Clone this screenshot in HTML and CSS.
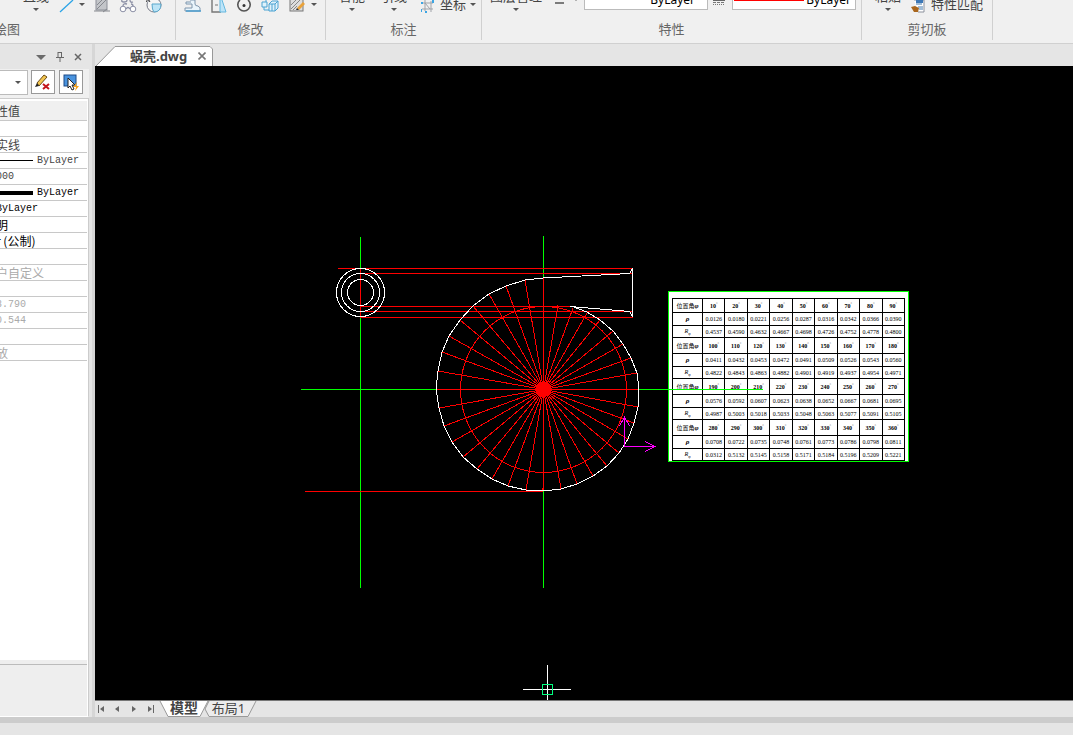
FILE: index.html
```html
<!DOCTYPE html>
<html lang="zh-CN">
<head>
<meta charset="utf-8">
<title>蜗壳.dwg</title>
<link rel="stylesheet" href="styles.css">
</head>
<body>
<div class="app">
  <header class="ribbon">
    <section class="group group-draw">
      <div class="tools">
        <button class="tool big clipped"><span class="big-label">圆弧</span></button>
        <button class="tool big"><span class="big-label">直线</span><i class="caret"></i></button>
        <button class="tool" aria-label="构造线"><svg width="16" height="14"><path d="M2 12L15 0" stroke="#2aa3e6" stroke-width="1.3" fill="none"/></svg></button>
        <i class="caret mid"></i>
        <button class="tool" aria-label="填充"><svg width="16" height="14"><rect x="2" y="-4" width="11" height="14" fill="#c3c5c9" stroke="#8b8e97"/><path d="M3 9L12 0M3 5L8 0M13 9l-4 3M0 11h16" stroke="#85888e"/></svg></button>
        <button class="tool" aria-label="修订云线"><svg width="18" height="14"><path d="M3 0q-1 2 2 2q3 0 3-2M11 0q0 3 3 2M8 4q-4-1-4 2M12 4q2 0 2 2" fill="none" stroke="#8b8fa5" stroke-width="1.3"/><circle cx="4" cy="9" r="2.8" fill="#fff" stroke="#8b8fa5"/><circle cx="14" cy="9" r="2.8" fill="#fff" stroke="#8b8fa5"/><path d="M7 9q2-3 4 0" fill="none" stroke="#8b8fa5" stroke-width="1.3"/></svg></button>
        <button class="tool" aria-label="面域"><svg width="16" height="14"><circle cx="8" cy="5" r="7" fill="#f5f5f5" stroke="#777b88"/><path d="M6 4h9q0 8-7 8q-2-2-2-8" fill="#bce4f6" stroke="#5aa7cb"/><path d="M0 2l2-3 2 3" stroke="#333" fill="none"/></svg></button>
      </div>
      <h2 class="group-name">绘图</h2>
    </section>
    <section class="group group-modify">
      <div class="tools">
        <button class="tool" aria-label="偏移"><svg width="18" height="14"><path d="M6 0h5v4q0 2 3 2q3 1 2 5H1V8h7V4H2V2h5" fill="#e9f5fc" stroke="#7e96ad"/><path d="M2 11h15" stroke="#4b9cce" stroke-width="1.5"/></svg></button>
        <button class="tool" aria-label="镜像"><svg width="16" height="14"><path d="M1 0v12h9" fill="none" stroke="#777" stroke-width="1.4"/><path d="M9 0v12h6L11 0" fill="#bde4f8" stroke="#64b7df"/><path d="M4 5h3" stroke="#777"/></svg></button>
        <button class="tool" aria-label="旋转"><svg width="16" height="14"><path d="M12 0A6.200 6.200 0 1 1 4 0" fill="none" stroke="#555" stroke-width="1.6"/><circle cx="8" cy="5.500" r="1.500" fill="#333"/></svg></button>
        <button class="tool" aria-label="阵列"><svg width="18" height="14"><path d="M1 2h5v5H1zM8 4l3-3h6v7l-3 3H8zM8 4h6v7M14 4l3-3M3 7v3h5M5 0v2M11 4v7" fill="#dff2fb" stroke="#4ca3d2"/></svg></button>
        <button class="tool" aria-label="编辑填充"><svg width="18" height="14"><rect x="2" y="-4" width="13" height="15" fill="#ddd" stroke="#777"/><path d="M3 5l5-5M3 9l9-9M5 10l4-4" stroke="#888"/><path d="M9 8l6-6 2 2-6 6z" fill="#e9a23b"/><path d="M8 10l1-2 2 2z" fill="#333"/></svg></button>
        <i class="caret mid"></i>
      </div>
      <h2 class="group-name">修改</h2>
    </section>
    <section class="group group-dim">
      <div class="tools">
        <button class="tool big"><span class="big-label">智能</span><i class="caret"></i></button>
        <button class="tool big"><span class="big-label">引线</span><i class="caret"></i></button>
        <button class="tool text"><svg width="14" height="14"><path d="M2 3h10M1 9h11M4 0v11M10 1v11M4 3l5 6" fill="none" stroke="#a0a3a9"/><path d="M0 3h2M0 9v3M4 12h2M12 0v3" stroke="#3ca5e4" stroke-width="2"/></svg><span>坐标</span><i class="caret"></i></button>
      </div>
      <h2 class="group-name">标注</h2>
    </section>
    <section class="group group-props">
      <div class="tools">
        <button class="tool big"><span class="big-label">图层管理</span><i class="caret"></i></button>
        <svg class="weight" width="24" height="14"><path d="M1 3h9" stroke="#555" stroke-width="1.500"/><path d="M21 0h2" stroke="#777"/></svg>
        <label class="combo"><select class="combo-select" aria-label="线型"><option>ByLayer</option></select></label>
        <svg class="linetype" width="14" height="14"><path d="M1 .5h12" stroke="#666"/><path d="M1 2.500h12" stroke="#777" stroke-dasharray="3 1"/><path d="M1 4.500h12" stroke="#777" stroke-dasharray="1 1"/></svg>
        <label class="combo combo-color"><span class="swatch"></span><select class="combo-select" aria-label="颜色"><option>ByLayer</option></select></label>
      </div>
      <h2 class="group-name">特性</h2>
    </section>
    <section class="group group-clip">
      <div class="tools">
        <button class="tool big"><span class="big-label">粘贴</span><i class="caret"></i></button>
        <button class="tool text"><svg width="16" height="14"><path d="M4 0h10v12H8" fill="#fff" stroke="#8c919c"/><path d="M6 0h7v3H6z" fill="#3d78b7"/><path d="M6 4h6M8 7h5M9 9h4" stroke="#477daf"/><path d="M1 7l4-1 4 2-1 4H4z" fill="#a9661d"/></svg><span>特性匹配</span></button>
      </div>
      <h2 class="group-name">剪切板</h2>
    </section>
  </header>

  <div class="workspace">
    <aside class="panel">
      <div class="panel-head">
        <button class="tool" aria-label="菜单"><svg width="10" height="10"><path d="M0 3h10L5 8z" fill="#6b6b6b"/></svg></button>
        <button class="tool" aria-label="固定"><svg width="8" height="10"><path d="M2 0v5M2 .5h4M5.500 0v5M0 5.500h8M4 6v4" stroke="#666" fill="none"/></svg></button>
        <button class="tool" aria-label="关闭"><svg width="8" height="10"><path d="M1 2l6 6M7 2L1 8" stroke="#666" stroke-width="1.500"/></svg></button>
      </div>
      <div class="panel-tools">
        <button class="picker" aria-label="选择对象"><i class="caret"></i></button>
        <button class="square" aria-label="清除选择"><svg width="18" height="18"><path d="M3 10L10 2l3 2-8 9z" fill="#f3c650" stroke="#6b4b16"/><path d="M1 14l2-4 2 3z" fill="#222"/><path d="M9 11l6 5M15 11l-6 5" stroke="#c4161c" stroke-width="2"/></svg></button>
        <button class="square" aria-label="快速选择"><svg width="18" height="18"><rect x="2" y="2" width="12" height="11" fill="#4a94df" stroke="#1d4a87"/><path d="M6 5v10l2-2 2 4 2-1-2-4h3z" fill="#fff" stroke="#222"/><path d="M15 9l-4 5h3l-1 4 4-5h-3z" fill="#f6a21b"/></svg></button>
      </div>
      <div class="panel-body">
        <ul class="rows">
          <li class="row row-title"><span class="back">性值</span></li>
          <li class="row"></li>
          <li class="row grey"><span class="back">实线</span></li>
          <li class="row grey"><i class="rule"></i><span class="latin">ByLayer</span></li>
          <li class="row grey"><span class="latin back">000</span></li>
          <li class="row"><i class="rule thick"></i><span class="latin">ByLayer</span></li>
          <li class="row"><span class="latin back">ByLayer</span></li>
          <li class="row"><span class="back">明</span></li>
          <li class="row"><span class="back">r (公制)</span></li>
          <li class="row"></li>
          <li class="row off"><span class="back">户自定义</span></li>
          <li class="row"></li>
          <li class="row off"><span class="latin back">8.790</span></li>
          <li class="row off"><span class="latin back">0.544</span></li>
          <li class="row"></li>
          <li class="row off"><span class="back">放</span></li>
        </ul>
        <div class="hint"></div>
      </div>
    </aside>

    <main class="document">
      <nav class="file-tabs">
        <div class="file-tab">
          <svg class="shape" width="118" height="21"><path d="M0 21L20 .5H115L117.500 3V21" fill="#fff" stroke="#999"/></svg>
          <span class="file-name">蜗壳.dwg</span>
          <button class="tool" aria-label="关闭 蜗壳.dwg"><svg width="8" height="8"><path d="M.5 .5l7 7M7.500 .5L.5 7.500" stroke="#777" stroke-width="1.600"/></svg></button>
        </div>
      </nav>

      <div class="canvas">
        <table class="sheet"><tbody class="sheet-body" id="sheet"></tbody></table>
        <svg class="drawing" viewBox="95 66 978 634" width="978" height="634" shape-rendering="crispEdges" fill="none">
          <g stroke="#0f0"><path d="M360.500 237V588M543.500 236V588M301 389.500H763"/></g>
          <g stroke="#f00">
            <path d="M360.500 268V317M543.500 278V491M436 389.500H639M338 268.500H633M361 273.500H633M360 306.500H575M360 311.500H633M360 317.500H633M305 491.500H543"/>
            <circle cx="543.500" cy="389.500" r="83"/>
            <path id="spokes"/>
            <circle cx="543.500" cy="389.500" r="7" fill="#f00"/>
          </g>
          <g stroke="#fff">
            <circle cx="360.500" cy="292.500" r="24"/><circle cx="360.500" cy="292.500" r="19"/><circle cx="360.500" cy="292.500" r="13"/>
            <path id="casing"/>
            <path d="M630 273.500L543 278M570 306.500L630 311.500M632.500 268V317M630 273l2-4M630 312l2 4"/>
            <path d="M523 689.500H571M547.500 665V700"/>
          </g>
          <path d="M542.500 684.500h10v10h-10z" stroke="#00ff80"/>
          <path d="M624.500 417V446.500H655M619.500 426L624.500 417L629.500 426M645 441.500L655 446.500L645 451.500" stroke="#f0f"/>
        </svg>
      </div>

      <nav class="layout-tabs">
        <div class="steps">
          <button class="tool" aria-label="第一个"><svg width="8" height="8"><path d="M1.500 0v8" stroke="#666"/><path d="M7 1v6L3 4z" fill="#666"/></svg></button>
          <button class="tool" aria-label="上一个"><svg width="8" height="8"><path d="M5 1v6L1 4z" fill="#666"/></svg></button>
          <button class="tool" aria-label="下一个"><svg width="8" height="8"><path d="M1 1v6l4-3z" fill="#666"/></svg></button>
          <button class="tool" aria-label="最后一个"><svg width="8" height="8"><path d="M5.500 0v8" stroke="#666"/><path d="M0 1v6l4-3z" fill="#666"/></svg></button>
        </div>
        <button class="layout-tab active"><svg class="shape" width="49" height="17"><path d="M0 0L8 15.500H40L48 0" fill="#fff" stroke="#999"/></svg><span>模型</span></button>
        <button class="layout-tab"><svg class="shape" width="53" height="17"><path d="M4 0L0 8L4 15.500H43L51 0" fill="#ececec" stroke="#999"/></svg><span>布局1</span></button>
      </nav>
    </main>
  </div>
  <footer class="status"></footer>
</div>
<script src="app.js"></script>
</body>
</html>
```
FILE: styles.css
```css
* { box-sizing: border-box; }
body { margin: 0; font: 13px/16px "Noto Sans", "Noto Sans CJK SC", sans-serif; color: #444; background: #e5e5e5; }
button { font: inherit; color: inherit; border: 0; padding: 0; background: none; }
svg { display: block; }
.app { display: flex; flex-direction: column; height: 100vh; overflow: hidden; }

.ribbon { display: flex; flex: none; height: 44px; background: #f0f0f0; border-bottom: 1px solid #d0d0d0; overflow: hidden; }
.group { flex: none; display: flex; flex-direction: column; height: 40px; border-right: 1px solid #d0d0d0; }
.tools { display: flex; align-items: flex-start; height: 20px; }
.group-name { margin: 0; font-size: 13px; font-weight: 400; line-height: 18px; text-align: center; color: #666; white-space: nowrap; }
.group-draw { width: 176px; }
.group-draw .tools { gap: 9px; }
.group-draw .group-name { text-align: left; margin-left: -6px; }
.group-modify { width: 150px; }
.group-modify .tools { gap: 9px; padding-left: 8px; }
.group-dim { width: 156px; }
.group-dim .tools { gap: 16px; padding-left: 13px; }
.group-props { width: 380px; }
.group-props .tools { gap: 6px; padding-left: 8px; }
.group-clip { width: 131px; }
.group-clip .tools { gap: 11px; padding-left: 13px; }
.tool { display: flex; flex: none; }
.tool.big { flex-direction: column; align-items: center; }
.big .caret { margin-top: 8px; }
.big-label { margin-top: -8px; height: 8px; line-height: 8px; white-space: nowrap; }
.clipped { width: 8px; overflow: hidden; margin-right: 6px; }
.caret.mid { margin: 3px 0 0 -4px; }
.text { gap: 3px; line-height: 8px; white-space: nowrap; }
.text svg { margin-left: -2px; margin-right: 2px; }
.text .caret { margin: 3px 0 0 1px; }
.caret { flex: none; border: 3px solid transparent; border-top: 3px solid #555; border-bottom: 0; }
.weight { flex: none; margin-left: 6px; }
.combo { display: flex; flex: none; width: 124px; height: 21px; margin-top: -11px; background: #fff; border: 1px solid #bbb; }
.combo-select { flex: 1; min-width: 0; border: 0; padding: 0 12px 0 0; background: none; font: 12px/16px "Noto Sans", sans-serif; text-align: right; text-align-last: right; appearance: none; color: #000; }
.swatch { width: 70px; height: 1px; margin: 10px 0 0 1px; background: #f00; }
.combo-color .combo-select { padding: 0 4px 0 0; }
.linetype { flex: none; margin-left: -2px; }

.workspace { display: flex; flex: 1; min-height: 0; }
.panel { display: flex; flex-direction: column; flex: none; width: 95px; background: #e5e5e5; border-right: 3px solid #d6d6d6; }
.panel-head { display: flex; flex: none; align-items: center; justify-content: flex-end; gap: 10px; height: 25px; padding-right: 10px; }
.panel-tools { display: flex; flex: none; gap: 4px; height: 29px; padding-top: 1px; margin-right: 3px; background: #f0f0f0; }
.picker { display: flex; align-items: center; justify-content: flex-end; width: 28px; height: 25px; padding-right: 6px; background: #fff; border: 1px solid #bbb; border-left: 0; margin-right: -1px; }
.square { display: flex; align-items: center; justify-content: center; width: 24px; height: 24px; background: #fff; border: 1px solid #999; }
.panel-body { display: flex; flex-direction: column; flex: 1; min-height: 0; margin-right: 3px; padding: 2px 1px 0 0; background: #fff; border: 1px solid #ccc; border-left: 0; border-bottom: 1px solid #fff; }
.rows { flex: 1; margin: 0; padding: 0; list-style: none; overflow: hidden; }
.row { display: flex; align-items: center; height: 16px; border-bottom: 1px solid #c8c8c8; line-height: 14px; font-size: 12px; font-family: "Noto Sans CJK SC", sans-serif; color: #000; white-space: nowrap; }
.row-title { height: 20px; background: #f0f0f0; color: #444; }
.back { margin-left: -4px; }
.latin { font: 10px/15px "Liberation Mono", monospace; }
.grey { color: #444; }
.off { color: #aaa; }
.rule { width: 33px; height: 1px; margin-right: 4px; background: #000; }
.thick { height: 4px; }
.hint { flex: none; height: 56px; background: #eee; border-top: 4px solid #eee; box-shadow: inset 0 1px #bbb; }

.document { display: flex; flex-direction: column; flex: 1; min-width: 0; }
.file-tabs { display: flex; flex: none; align-items: flex-end; height: 22px; }
.file-tab { position: relative; display: flex; align-items: center; gap: 11px; height: 20px; padding: 0 7px 0 35px; }
.file-name { position: relative; font-weight: 700; line-height: 14px; }
.file-tab .tool { position: relative; }
.shape { position: absolute; left: 0; top: 0; overflow: visible; }
.canvas { position: relative; flex: 1; min-height: 0; overflow: hidden; background: #000; }
.drawing { position: absolute; left: 0; top: 0; }
.sheet { position: absolute; left: 573px; top: 225px; width: 241px; padding: 6px 3px 0; border: 1px solid #0f0; background: #fff; border-spacing: 0; color: #000; font: 6px/6px "Liberation Serif", "Noto Sans CJK SC", serif; table-layout: fixed; }
.cell { height: 13px; padding: 0; border: 0 solid #000; border-width: 0 1px 1px 0; text-align: center; white-space: nowrap; font-weight: 400; }
.cell:first-child { width: 31px; border-left-width: 1px; }
.radius .cell { height: 12px; }
.angle .cell { height: 16px; font-weight: 700; }
.first .cell { height: 15px; border-top-width: 1px; }
.sheet .name { font-weight: 400; }
.cell sub, .cell sup { font-size: 4px; line-height: 0; font-weight: 400; }
.greek { font-size: 7px; font-style: italic; font-weight: 700; }

.layout-tabs { display: flex; flex: none; height: 17px; border-top: 1px solid #777; padding-left: 2px; }
.steps { display: flex; align-items: center; gap: 9px; width: 63px; }
.layout-tab { position: relative; flex: none; width: 48px; line-height: 12px; padding-bottom: 3px; text-align: center; }
.layout-tab span { position: relative; }
.layout-tab.active { z-index: 1; font-weight: 700; font-size: 14px; }
.layout-tab:last-child { width: 53px; margin-left: -3px; padding-right: 6px; }
.status { flex: none; height: 18px; background: #e5e5e5; border-top: 6px solid #ccc; }
```
FILE: app.js
```javascript
const centre = [543.5, 389.5];
const rim = [
  [543, 278], [525, 280], [506, 286], [489, 294], [473, 306], [460, 320], [449, 336],
  [442, 352], [438, 371], [436, 389], [439, 408], [444, 426], [452, 442], [463, 457],
  [477, 469], [492, 479], [508, 486], [526, 490], [543, 491], [561, 489], [577, 484],
  [593, 476], [607, 466], [619, 453], [628, 439], [634, 423], [638, 407], [639, 389],
  [637, 373], [631, 358], [623, 344], [613, 331], [600, 320], [587, 312], [571, 306]
];
document.getElementById("casing").setAttribute("d", "M" + rim.map(p => p.join(" ")).join("L"));
const ends = rim.slice(0, -2).concat([[587, 313], [573, 308], [558, 305]]);
document.getElementById("spokes").setAttribute("d", ends.map(p => `M${centre.join(" ")}L${p.join(" ")}`).join(""));

const blocks = [
  { from: 10,
    rho: "0.0126 0.0180 0.0221 0.0256 0.0287 0.0316 0.0342 0.0366 0.0390",
    r: "0.4537 0.4590 0.4632 0.4667 0.4698 0.4726 0.4752 0.4778 0.4800" },
  { from: 100,
    rho: "0.0411 0.0432 0.0453 0.0472 0.0491 0.0509 0.0526 0.0543 0.0560",
    r: "0.4822 0.4843 0.4863 0.4882 0.4901 0.4919 0.4937 0.4954 0.4971" },
  { from: 190,
    rho: "0.0576 0.0592 0.0607 0.0623 0.0638 0.0652 0.0667 0.0681 0.0695",
    r: "0.4987 0.5003 0.5018 0.5033 0.5048 0.5063 0.5077 0.5091 0.5105" },
  { from: 280,
    rho: "0.0708 0.0722 0.0735 0.0748 0.0761 0.0773 0.0786 0.0798 0.0811",
    r: "0.0312 0.5132 0.5145 0.5158 0.5171 0.5184 0.5196 0.5209 0.5221" }
];
const line = (kind, name, values) =>
  `<tr class="${kind}"><th class="cell name" scope="row">${name}</th>${values.map(v => `<td class="cell">${v}</td>`).join("")}</tr>`;
document.getElementById("sheet").innerHTML = blocks.map((b, i) =>
  line(i ? "angle" : "angle first", '位置角<span class="greek">φ</span>', Array.from({ length: 9 }, (_, k) => `${b.from + 10 * k}<sup>°</sup>`)) +
  line("rho", '<span class="greek">ρ</span>', b.rho.split(" ")) +
  line("radius", "<i>R</i><sub>φ</sub>", b.r.split(" "))
).join("");
```
